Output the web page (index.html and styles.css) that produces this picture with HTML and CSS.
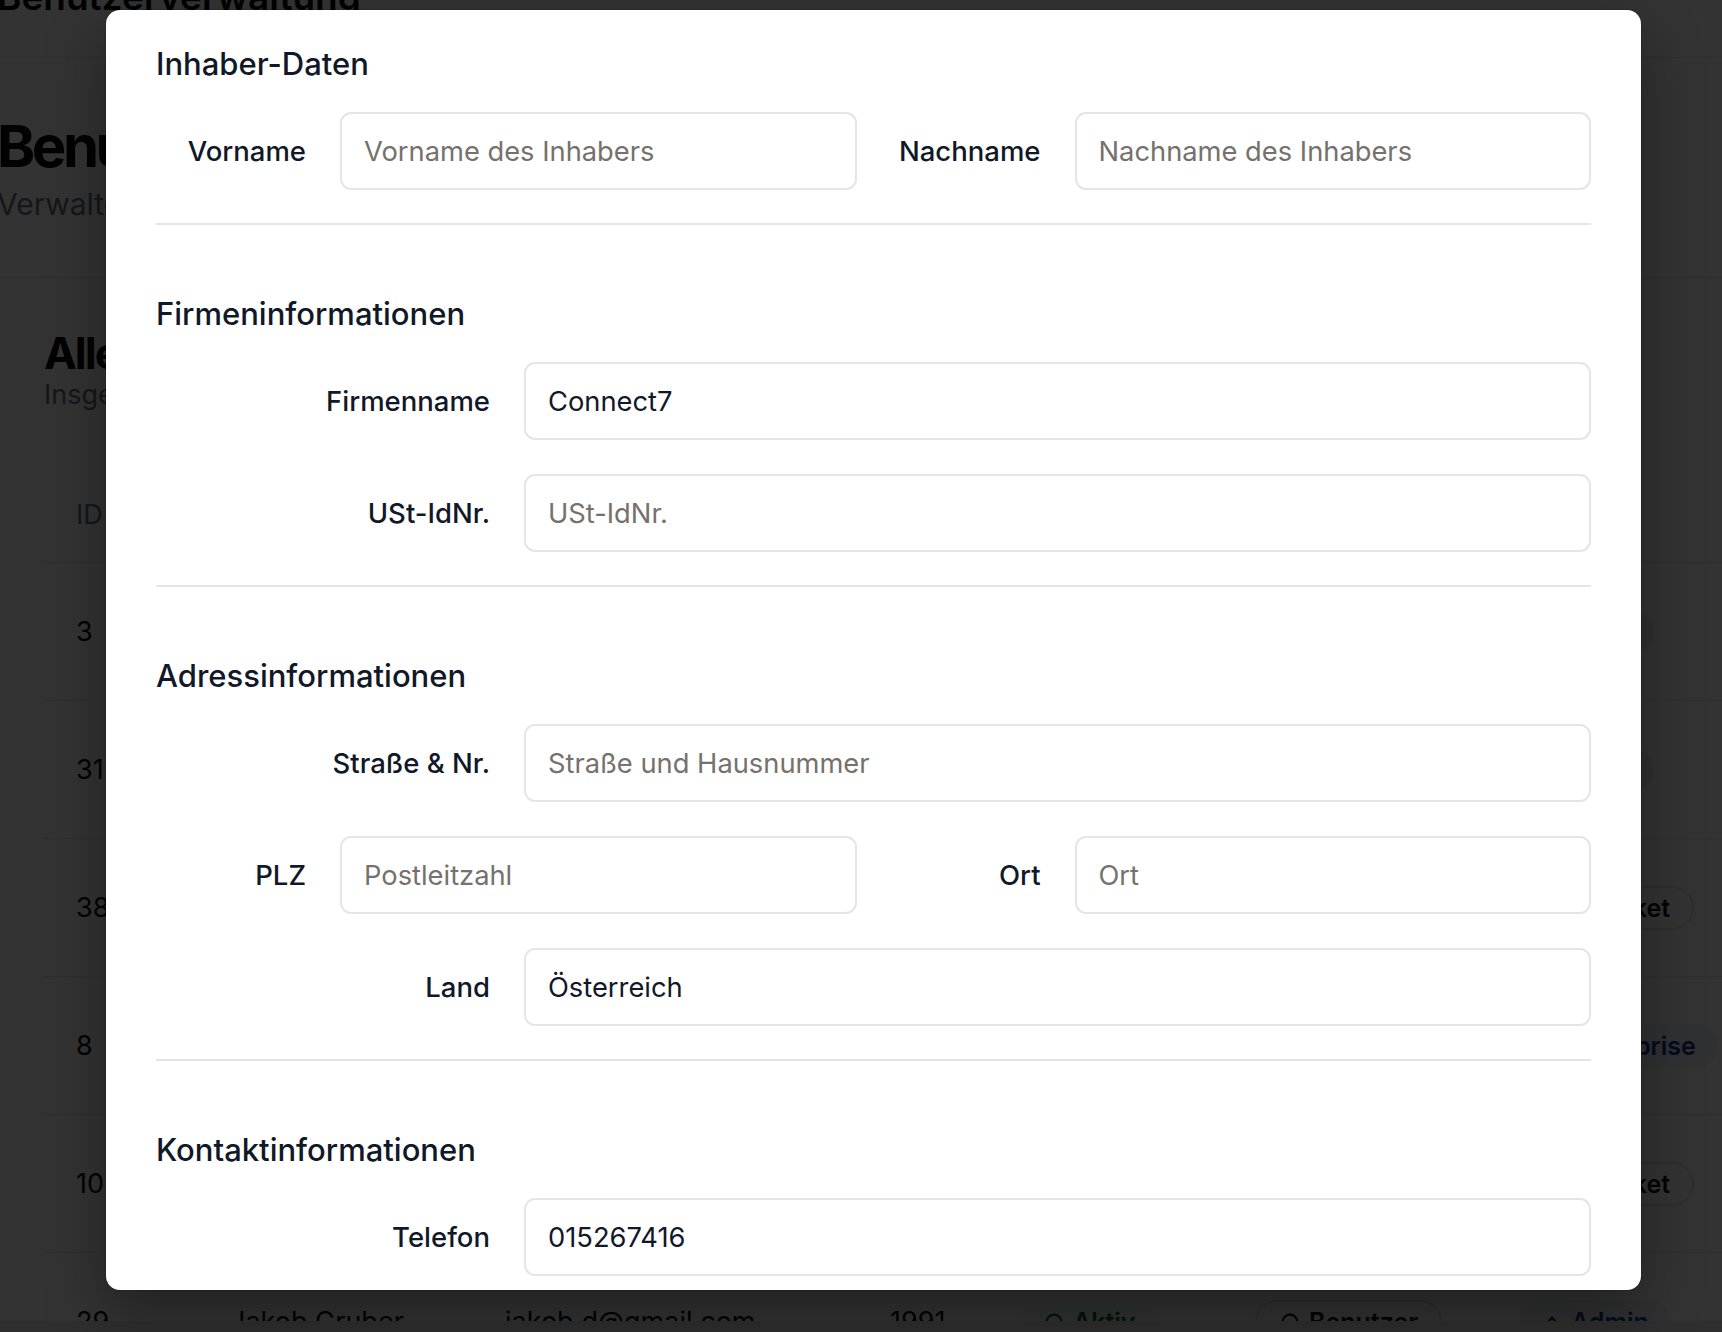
FILE: index.html
```html
<!DOCTYPE html>
<html lang="de">
<head>
<meta charset="utf-8">
<title>Benutzerverwaltung</title>
<link rel="stylesheet" href="styles.css">
</head>
<body>
<div class="page">
  <header class="topbar"><span>Benutzerverwaltung</span></header>
  <div class="intro">
    <h1>Benutzerverwaltung</h1>
    <p>Verwalten Sie alle Benutzer und deren Abonnements</p>
  </div>
  <section class="card">
    <div class="card-head">
      <div>
        <h2>Alle Benutzer</h2>
        <p>Insgesamt 42 Benutzer</p>
      </div>
      <div class="search">Benutzer suchen…</div>
    </div>
    <div class="table">
      <div class="tr th">
        <span>ID</span><span>Name</span><span>E-Mail</span><span>Jahr</span><span>Status</span><span>Rolle</span><span>Paket</span>
      </div>
      <div class="tr">
        <span>3</span><span>Max Berger</span><span>max@berger.at</span><span>1988</span><span class="pill green">Aktiv</span><span class="pill outline">Benutzer</span><span class="pill gray">Starter</span>
      </div>
      <div class="tr">
        <span>31</span><span>Anna Huber</span><span>anna@huber.at</span><span>1992</span><span class="pill green">Aktiv</span><span class="pill outline">Benutzer</span><span class="pill gray">Starter</span>
      </div>
      <div class="tr">
        <span>38</span><span>Lukas Maier</span><span>lukas@maier.at</span><span>1990</span><span class="pill green">Aktiv</span><span class="pill outline">Benutzer</span><span class="pill outline">Kein Paket</span>
      </div>
      <div class="tr">
        <span>8</span><span>Connect7</span><span>office@connect7.at</span><span>1985</span><span class="pill green">Aktiv</span><span class="pill outline">Benutzer</span><span class="pill blue"><svg class="ico" viewBox="0 0 24 24"><path d="M3 8l4.5 4L12 5l4.5 7L21 8l-2 10H5z"/></svg>Enterprise</span>
      </div>
      <div class="tr">
        <span>10</span><span>Sophie Wolf</span><span>sophie@wolf.at</span><span>1994</span><span class="pill green">Aktiv</span><span class="pill outline">Benutzer</span><span class="pill outline">Kein Paket</span>
      </div>
      <div class="tr">
        <span>29</span><span>Jakob Gruber</span><span>jakob.d@gmail.com</span><span>1991</span><span class="pill green"><svg class="ico" viewBox="0 0 24 24"><circle cx="12" cy="12" r="8"/></svg>Aktiv</span><span class="pill outline"><svg class="ico" viewBox="0 0 24 24"><circle cx="12" cy="12" r="8"/></svg>Benutzer</span><span class="pill blue"><svg class="ico" viewBox="0 0 24 24"><path d="M5 15l7-8 7 8"/></svg>Admin</span>
      </div>
    </div>
  </section>
</div>

<div class="overlay"></div>

<div class="modal">
  <section class="group">
    <h3>Inhaber-Daten</h3>
    <div class="rows">
      <div class="row two">
        <label for="vn">Vorname</label>
        <input id="vn" type="text" placeholder="Vorname des Inhabers">
        <label for="nn">Nachname</label>
        <input id="nn" type="text" placeholder="Nachname des Inhabers">
      </div>
    </div>
  </section>
  <hr class="divider">
  <section class="group">
    <h3>Firmeninformationen</h3>
    <div class="rows">
      <div class="row one">
        <label for="fn">Firmenname</label>
        <input id="fn" type="text" value="Connect7">
      </div>
      <div class="row one">
        <label for="ust">USt-IdNr.</label>
        <input id="ust" type="text" placeholder="USt-IdNr.">
      </div>
    </div>
  </section>
  <hr class="divider">
  <section class="group">
    <h3>Adressinformationen</h3>
    <div class="rows">
      <div class="row one">
        <label for="str">Straße &amp; Nr.</label>
        <input id="str" type="text" placeholder="Straße und Hausnummer">
      </div>
      <div class="row two">
        <label for="plz">PLZ</label>
        <input id="plz" type="text" placeholder="Postleitzahl">
        <label for="ort">Ort</label>
        <input id="ort" type="text" placeholder="Ort">
      </div>
      <div class="row one">
        <label for="land">Land</label>
        <input id="land" type="text" value="Österreich">
      </div>
    </div>
  </section>
  <hr class="divider">
  <section class="group">
    <h3>Kontaktinformationen</h3>
    <div class="rows">
      <div class="row one">
        <label for="tel">Telefon</label>
        <input id="tel" type="text" value="015267416">
      </div>
      <div class="row one">
        <label for="mail">E-Mail</label>
        <input id="mail" type="text" value="office@connect7.at">
      </div>
    </div>
  </section>
</div>
</body>
</html>
```

FILE: styles.css
```css
* { box-sizing: border-box; }

html, body {
  margin: 0;
  padding: 0;
}

body {
  width: 1722px;
  height: 1332px;
  overflow: hidden;
  background: #ebebeb;
  font-family: Inter, "Noto Sans", "Liberation Sans", sans-serif;
  color: #0a0a0a;
  position: relative;
}

/* ---------- background page ---------- */
.page {
  width: 1722px;
  height: 1321px;
  overflow: hidden;
  background: #ffffff;
}

.topbar {
  height: 123px;
  margin-top: -65px;
  margin-left: -3px;
  display: flex;
  align-items: center;
  border-bottom: 1px solid #e5e5e5;
  font-size: 37px;
  font-weight: 600;
}

.intro {
  padding: 52px 0 53px 0;
  margin-left: -3px;
}

.intro h1 {
  margin: 0;
  font-size: 58px;
  line-height: 72px;
  font-weight: 700;
  letter-spacing: -3.5px;
}

.intro p {
  margin: 2px 0 0;
  font-size: 30px;
  line-height: 40px;
  color: #6b7280;
}

.card {
  border-top: 1px solid #e5e5e5;
  padding: 49px 0 0 44px;
}

.card-head {
  display: flex;
  justify-content: space-between;
  align-items: flex-start;
}

.card-head h2 {
  margin: 0;
  font-size: 44px;
  line-height: 52px;
  font-weight: 700;
  letter-spacing: -2px;
}

.card-head p {
  margin: 0;
  font-size: 27px;
  line-height: 32px;
  color: #6b7280;
}

.search {
  width: 420px;
  height: 78px;
  margin-top: 12px;
  margin-right: -447px;
  border: 2px solid #e5e5e5;
  border-radius: 12px;
  padding: 0 24px;
  display: flex;
  align-items: center;
  font-size: 26px;
  color: #9ca3af;
}

.table {
  margin-top: 50px;
}

.tr {
  display: grid;
  grid-template-columns: 154px 275px 385px 131px 234px 264px 1fr;
  align-items: center;
  height: 138px;
  padding-left: 32px;
  border-bottom: 1px solid #e5e5e5;
  font-size: 27px;
}

.tr.th {
  height: 96px;
  color: #6b7280;
}

.pill {
  justify-self: start;
  display: inline-flex;
  align-items: center;
  gap: 8px;
  height: 44px;
  padding: 0 22px;
  border-radius: 22px;
  font-size: 25px;
  font-weight: 600;
}

.ico {
  width: 22px;
  height: 22px;
  fill: none;
  stroke: currentColor;
  stroke-width: 2.5;
  stroke-linejoin: round;
  stroke-linecap: round;
}

.pill.gray { background: #eef1f5; color: #1f2937; padding: 0 26px; }
.pill.green { background: #ecfdf3; color: #166534; }
.pill.outline { border: 2px solid #e5e7eb; color: #111827; }
.pill.blue { background: #eef2ff; color: #1e3a8a; }

/* ---------- overlay + modal ---------- */
.overlay {
  position: absolute;
  inset: 0;
  background: rgba(0, 0, 0, 0.8);
}

.modal {
  position: absolute;
  left: 106px;
  top: 10px;
  width: 1535px;
  height: 1280px;
  overflow: hidden;
  background: #ffffff;
  border-radius: 14px;
  box-shadow: 0 0 0 1px rgba(0, 0, 0, 0.12), 0 24px 60px rgba(0, 0, 0, 0.35);
  padding: 34px 50px 0 50px;
  color: #111827;
}

.group h3 {
  margin: 0 0 28px;
  font-size: 31px;
  line-height: 40px;
  font-weight: 500;
  color: #111827;
}

.rows {
  display: flex;
  flex-direction: column;
  gap: 34px;
}

.row {
  display: grid;
  align-items: center;
  column-gap: 34px;
}

.row.one { grid-template-columns: 334px 1fr; }
.row.two { grid-template-columns: 150px 1fr 150px 1fr; }

.row label {
  text-align: right;
  font-size: 27.5px;
  font-weight: 500;
  color: #111827;
  white-space: nowrap;
}

.row input {
  width: 100%;
  height: 78px;
  border: 2px solid #e5e5e5;
  border-radius: 11px;
  padding: 0 22px;
  font-family: Inter, "Noto Sans", "Liberation Sans", sans-serif;
  font-size: 27.3px;
  color: #111827;
  background: #ffffff;
  outline: none;
}

.row input::placeholder {
  color: #76716c;
  opacity: 1;
}

.divider {
  border: 0;
  height: 2px;
  background: #e5e5e5;
  margin: 33px 0 69px;
}
```
